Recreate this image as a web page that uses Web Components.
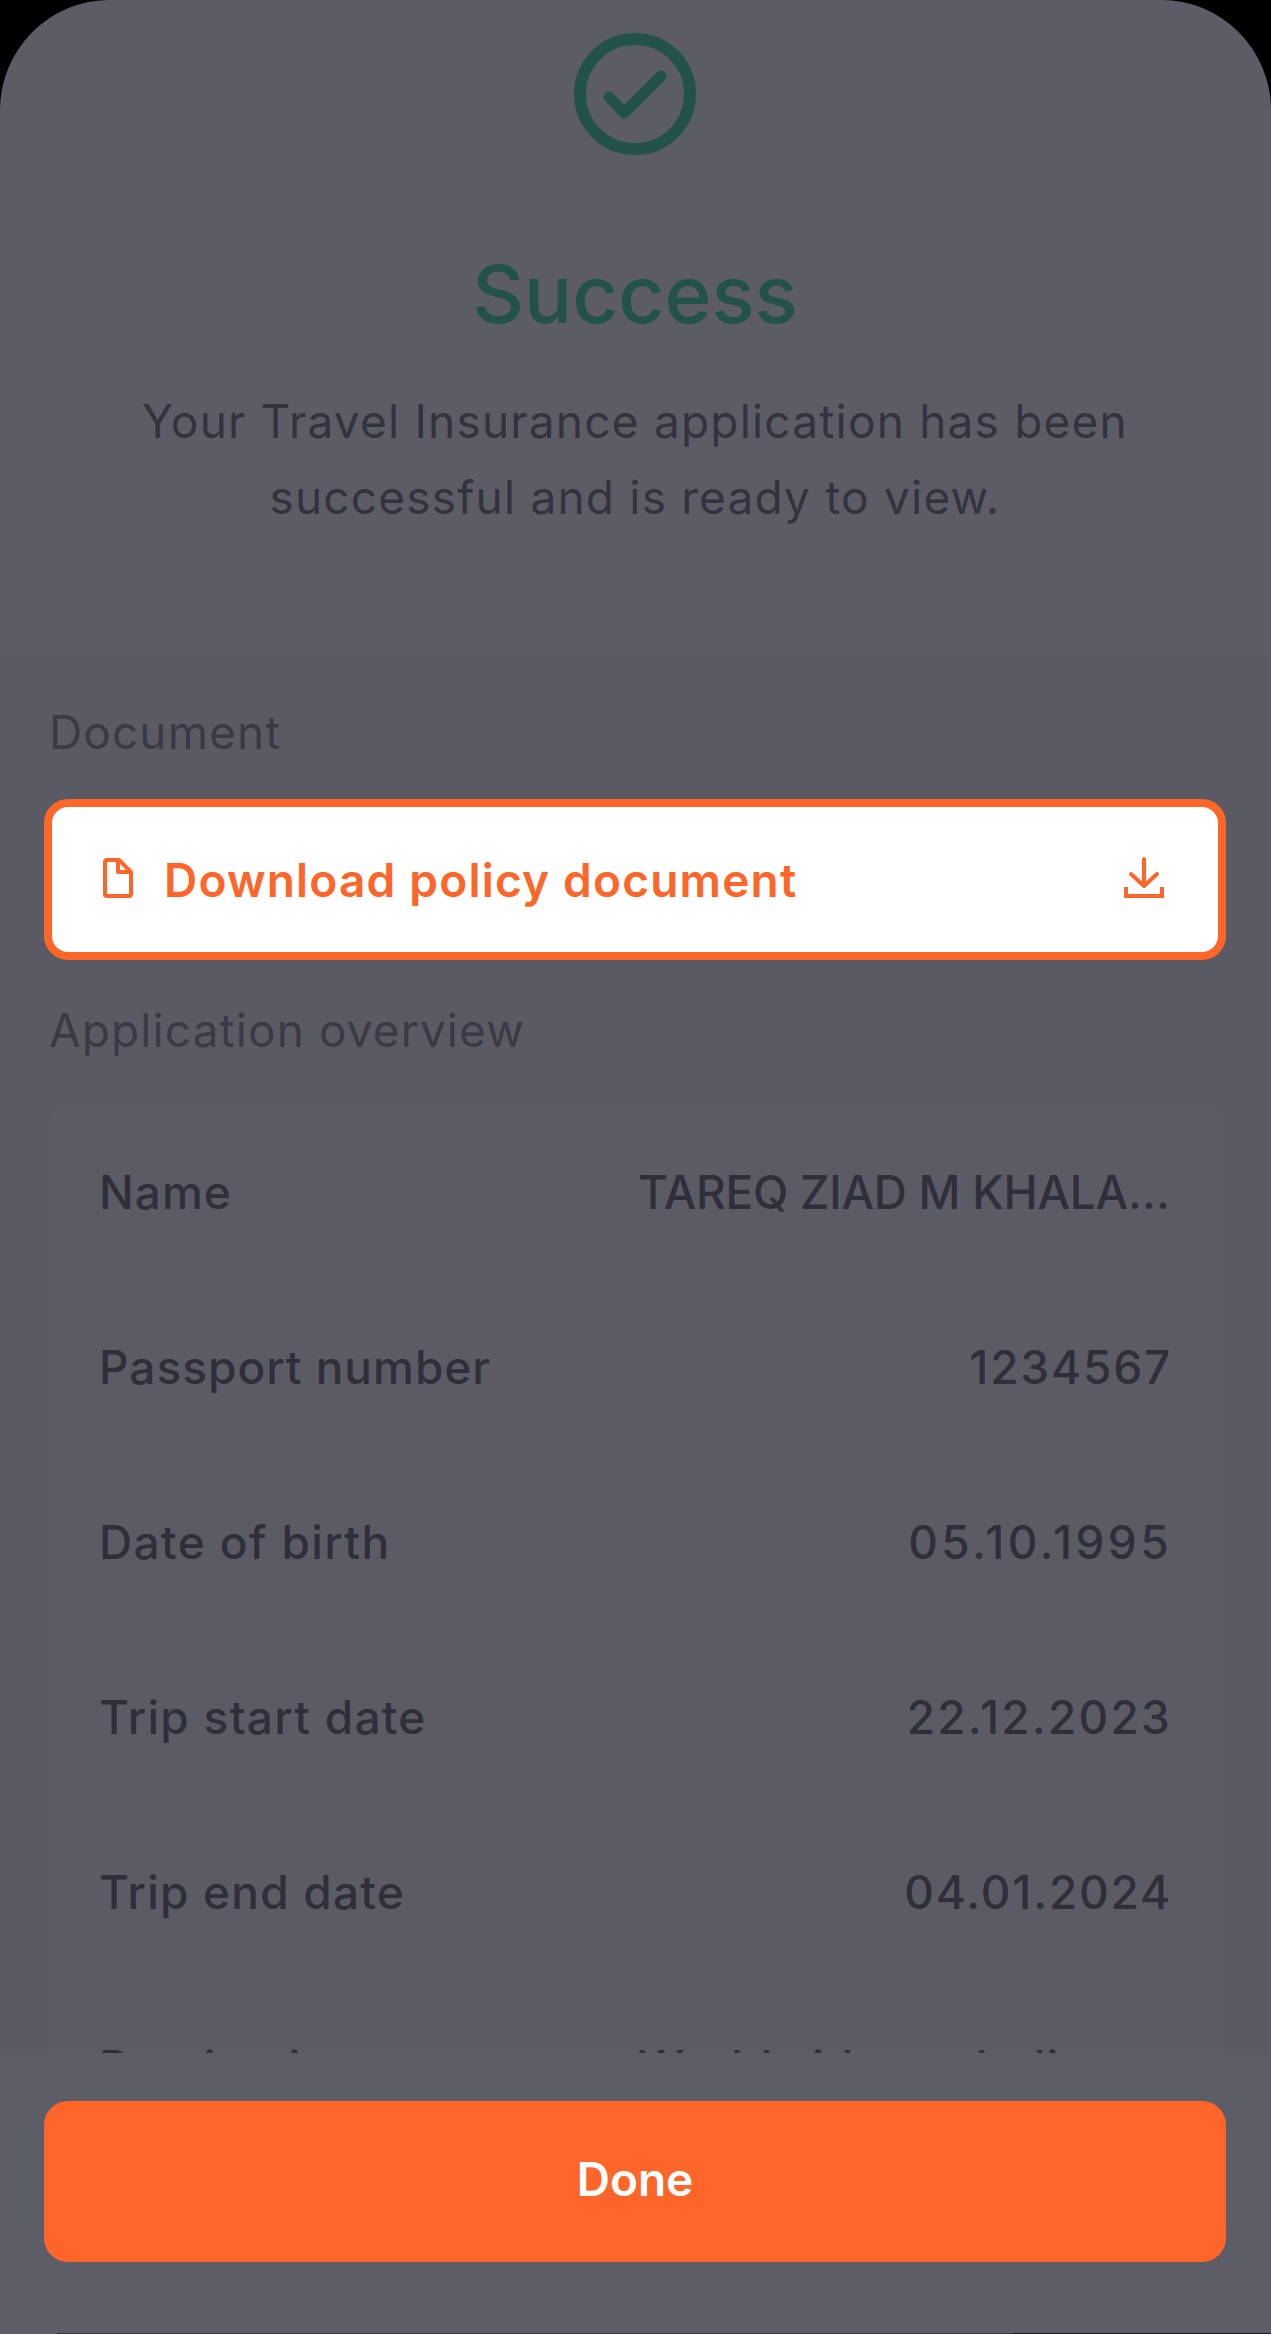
<!DOCTYPE html>
<html>
<head>
<meta charset="utf-8">
<style>
  html, body { margin: 0; background: #000; }
  body { font-family: "Inter", "Liberation Sans", sans-serif; }
</style>
</head>
<body>
<success-screen>
  <success-header title="Success" message="Your Travel Insurance application has been successful and is ready to view."></success-header>
  <section-label>Document</section-label>
  <download-card>Download policy document</download-card>
  <section-label>Application overview</section-label>
  <overview-card>
    <overview-row label="Name" value="TAREQ ZIAD M KHALAF AL TAMIMI" style="--value-spacing: -0.3px"></overview-row>
    <overview-row label="Passport number" value="1234567" style="--value-spacing: 1.8px"></overview-row>
    <overview-row label="Date of birth" value="05.10.1995" style="--value-spacing: 3.4px; --label-spacing: 1.4px"></overview-row>
    <overview-row label="Trip start date" value="22.12.2023" style="--value-spacing: 2.2px; --label-spacing: 1.3px"></overview-row>
    <overview-row label="Trip end date" value="04.01.2024" style="--value-spacing: 1.8px; --label-spacing: 1.2px"></overview-row>
    <overview-row label="Destination" value="Worldwide excluding USA and Canada" style="--value-spacing: 1px"></overview-row>
  </overview-card>
  <done-bar slot="footer">Done</done-bar>
</success-screen>
<script>
  // Small helper so each element just declares its css and markup
  function shadow(el, html) {
    el.attachShadow({ mode: "open" }).innerHTML = html;
    return el.shadowRoot;
  }

  class SuccessScreen extends HTMLElement {
    constructor() {
      super();
      shadow(this, `
        <style>
          :host {
            display: block;
            position: relative;
            width: 1271px;
            height: 2334px;
            overflow: hidden;
            box-sizing: border-box;
            background: linear-gradient(#5c5c67 655px, #5a5a64 655px);
            border-radius: 110px 110px 0 0;
            padding: 33px 45px 0 44px;
          }
        </style>
        <slot></slot>
        <slot name="footer"></slot>
      `);
    }
  }

  class SuccessHeader extends HTMLElement {
    constructor() {
      super();
      const root = shadow(this, `
        <style>
          :host { display: block; text-align: center; height: 667px; }
          svg { display: block; margin: 0 auto; }
          h1 {
            margin: 89px 0 0;
            font-size: 80px;
            line-height: 100px;
            font-weight: 500;
            color: #22524b;
          }
          p {
            margin: 39px -10px 0;
            font-size: 46px;
            line-height: 76px;
            color: #33333f;
            letter-spacing: 1.2px;
          }
        </style>
        <svg width="122" height="122" viewBox="0 0 122 122" fill="none" stroke="#22524b" stroke-linecap="round" stroke-linejoin="round">
          <circle cx="61" cy="61" r="55" stroke-width="12"/>
          <path d="M35 64 L 50 80 L 87 43" stroke-width="11"/>
        </svg>
        <h1></h1>
        <p></p>
      `);
      root.querySelector("h1").textContent = this.getAttribute("title");
      root.querySelector("p").textContent = this.getAttribute("message");
    }
  }

  class SectionLabel extends HTMLElement {
    constructor() {
      super();
      shadow(this, `
        <style>
          :host {
            display: block;
            padding: 0 5px;
            font-size: 46px;
            line-height: 64px;
            letter-spacing: 1.1px;
            color: #3a3a46;
          }
        </style>
        <slot></slot>
      `);
    }
  }

  class DownloadCard extends HTMLElement {
    constructor() {
      super();
      shadow(this, `
        <style>
          :host {
            display: flex;
            align-items: center;
            box-sizing: border-box;
            height: 161px;
            margin: 35px 0 38px;
            padding: 0 54px 0 51px;
            background: #fff;
            border: 8px solid #fd6529;
            border-radius: 24px;
            color: #fd6529;
            font-size: 46px;
            font-weight: 600;
            letter-spacing: 1.2px;
          }
          .text { flex: 1; margin-left: 31px; }
          svg { margin-bottom: 4px; }
        </style>
        <svg width="30" height="40" viewBox="0 0 30 40" fill="none" stroke="#fd6529" stroke-width="4" stroke-linejoin="round">
          <path d="M2 4 Q2 2 4 2 H16 L28 14 V36 Q28 38 26 38 H4 Q2 38 2 36 Z"/>
          <path d="M15 3 V14 H27"/>
        </svg>
        <span class="text"><slot></slot></span>
        <svg width="40" height="41" viewBox="0 0 40 41" fill="none" stroke="#fd6529" stroke-width="4" stroke-linecap="round" stroke-linejoin="round">
          <path d="M20 2 V29 M7 17 L20 29 L33 17"/>
          <path d="M2 30 V39 H38 V30" stroke-linecap="butt" stroke-linejoin="miter"/>
        </svg>
      `);
    }
  }

  class OverviewCard extends HTMLElement {
    constructor() {
      super();
      shadow(this, `
        <style>
          :host {
            display: block;
            margin: 41px 4px 0 5px;
            background: #5b5b65;
            border-radius: 20px;
          }
        </style>
        <slot></slot>
      `);
    }
  }

  class OverviewRow extends HTMLElement {
    constructor() {
      super();
      const root = shadow(this, `
        <style>
          :host {
            display: flex;
            align-items: center;
            justify-content: space-between;
            box-sizing: border-box;
            height: 175px;
            padding: 3px 50px 0;
            border-bottom: 1px solid #585863;
            font-size: 46px;
            font-weight: 500;
            color: #2f2f3b;
          }
          .label { letter-spacing: var(--label-spacing, 1px); }
          .value {
            max-width: 534px;
            overflow: hidden;
            white-space: nowrap;
            text-overflow: ellipsis;
            letter-spacing: var(--value-spacing, 0);
          }
        </style>
        <span class="label"></span>
        <span class="value"></span>
      `);
      root.querySelector(".label").textContent = this.getAttribute("label");
      root.querySelector(".value").textContent = this.getAttribute("value");
    }
  }

  class DoneBar extends HTMLElement {
    constructor() {
      super();
      shadow(this, `
        <style>
          :host {
            display: block;
            position: absolute;
            left: 0;
            right: 0;
            top: 2053px;
            bottom: 0;
            box-sizing: border-box;
            padding: 48px 45px 0 44px;
            background:
              linear-gradient(to right, #5d5d68 57px, #3a3a44 57px, #3a3a44 1013px, #1a1a20 1013px) no-repeat bottom / 100% 1px,
              #5d5d68;
          }
          button {
            display: block;
            width: 100%;
            height: 161px;
            padding: 0 0 6px;
            border: 0;
            border-radius: 24px;
            background: #fd6529;
            color: #fff;
            font: 600 46px "Inter", "Liberation Sans", sans-serif;
          }
        </style>
        <button><slot></slot></button>
      `);
    }
  }

  customElements.define("success-screen", SuccessScreen);
  customElements.define("success-header", SuccessHeader);
  customElements.define("section-label", SectionLabel);
  customElements.define("download-card", DownloadCard);
  customElements.define("overview-card", OverviewCard);
  customElements.define("overview-row", OverviewRow);
  customElements.define("done-bar", DoneBar);
</script>
</body>
</html>
